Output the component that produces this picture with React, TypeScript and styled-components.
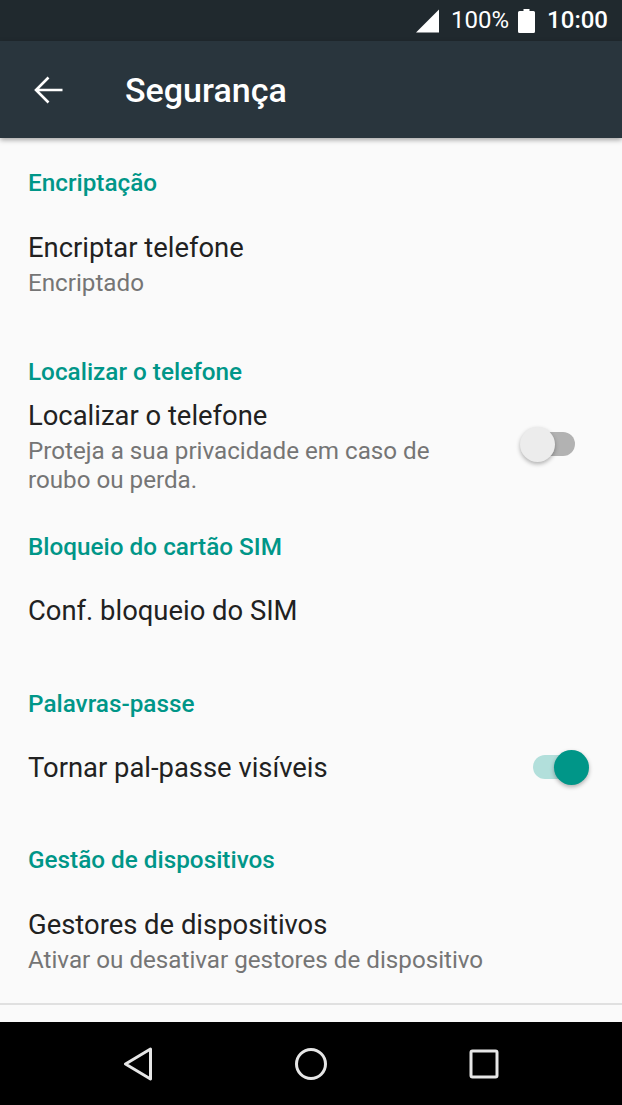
import {createGlobalStyle, styled} from 'styled-components';

const GlobalStyle = createGlobalStyle`
    html, body {
        margin: 0;
        padding: 0;
        background: #fafafa;
    }
`

const Screen = styled.div`
    display: flex;
    flex-direction: column;
    width: 622px;
    height: 1105px;
    overflow: hidden;
    background: #fafafa;
    font-family: Roboto, sans-serif;
`

const StatusBar = styled.header`
    display: flex;
    align-items: center;
    justify-content: flex-end;
    flex: 0 0 41px;
    padding-right: 14px;
    box-sizing: border-box;
    background: #20292e;
    color: #fff;
    font-size: 24px;
`

const StatusText = styled.span<{$strong?: boolean}>`
    margin-left: ${({$strong}) => ($strong ? '12px' : '11px')};
    margin-right: ${({$strong}) => ($strong ? '0' : '9px')};
    font-weight: ${({$strong}) => ($strong ? 500 : 400)};
    line-height: 41px;
`

const AppBar = styled.div`
    position: relative;
    z-index: 1;
    display: flex;
    align-items: center;
    flex: 0 0 97px;
    padding-left: 34px;
    box-sizing: border-box;
    background: #29353d;
    box-shadow: 0 2px 5px rgba(0, 0, 0, 0.35);
    color: #fff;
`

const Title = styled.h1`
    margin: 0 0 0 62px;
    font-size: 34px;
    font-weight: 500;
`

const Main = styled.main`
    flex: 1;
    overflow: hidden;
`

const Category = styled.section<{$top: number}>`
    padding-top: ${({$top}) => $top}px;
`

const Heading = styled.h2`
    margin: 0;
    padding-left: 28px;
    color: #009688;
    font-size: 24.3px;
    font-weight: 500;
    line-height: 32px;
`

// $nudge moves the content down (positive) or up (negative) without changing the row height
const Row = styled.div<{$height: number, $nudge?: number}>`
    display: flex;
    align-items: center;
    justify-content: space-between;
    box-sizing: border-box;
    height: ${({$height}) => $height}px;
    padding: ${({$nudge = 0}) => Math.max($nudge, 0)}px 40px ${({$nudge = 0}) => Math.max(-$nudge, 0)}px 28px;
`

const ItemTitle = styled.div`
    color: #212121;
    font-size: 27.4px;
    line-height: 36px;
`

const ItemSub = styled.div`
    margin-top: 3px;
    color: #757575;
    font-size: 24.2px;
    line-height: 29px;
`

const Track = styled.div<{$on?: boolean}>`
    position: relative;
    flex: 0 0 49px;
    height: 24px;
    margin-right: ${({$on}) => ($on ? '0' : '7px')};
    margin-bottom: ${({$on}) => ($on ? '2px' : '4px')};
    border-radius: 12px;
    background: ${({$on}) => ($on ? '#b2dfdb' : '#b2b2b2')};
`

const Thumb = styled.div<{$on?: boolean}>`
    position: absolute;
    top: -5px;
    left: ${({$on}) => ($on ? '21px' : '-6px')};
    width: 35px;
    height: 35px;
    border-radius: 50%;
    background: ${({$on}) => ($on ? '#009688' : '#ececec')};
    box-shadow: 0 2px 4px rgba(0, 0, 0, 0.3);
`

const Divider = styled.hr`
    margin: 0;
    border: 0;
    border-top: 2px solid #e0e0e0;
`

const NavBar = styled.nav`
    display: flex;
    align-items: center;
    flex: 0 0 83px;
    background: #000;
`

const NavSlot = styled.div`
    display: flex;
    align-items: center;
    justify-content: center;
    width: 173px;
    &:first-child {
        margin-left: 51px;
    }
`

function Toggle({on}: {on?: boolean}) {
    return (
        <Track $on={on}>
            <Thumb $on={on} />
        </Track>
    )
}

export default function App() {
    return (
        <Screen>
            <GlobalStyle />
            <StatusBar>
                <svg width="24" height="24" viewBox="0 0 24 24">
                    <path d="M23 0.5V23.5H0Z" fill="#fff" />
                </svg>
                <StatusText>100%</StatusText>
                <svg width="17" height="24" viewBox="0 0 17 24">
                    <path d="M5.5 0h6v2h4a1.5 1.5 0 0 1 1.5 1.5v19a1.5 1.5 0 0 1-1.5 1.5h-14a1.5 1.5 0 0 1-1.5-1.5v-19A1.5 1.5 0 0 1 1.500 2h4Z" fill="#fff" />
                </svg>
                <StatusText $strong>10:00</StatusText>
            </StatusBar>
            <AppBar>
                <svg width="29" height="28" viewBox="0 0 29 28">
                    <path d="M28.500 14H3.500M14.500 1.500 2 14l12.500 12.500" fill="none" stroke="#fff" strokeWidth="2.6" />
                </svg>
                <Title>Segurança</Title>
            </AppBar>
            <Main>
                <Category $top={29}>
                    <Heading>Encriptação</Heading>
                    <Row $height={132} $nudge={-3}>
                        <div>
                            <ItemTitle>Encriptar telefone</ItemTitle>
                            <ItemSub>Encriptado</ItemSub>
                        </div>
                    </Row>
                </Category>
                <Category $top={25}>
                    <Heading>Localizar o telefone</Heading>
                    <Row $height={114} $nudge={2}>
                        <div>
                            <ItemTitle>Localizar o telefone</ItemTitle>
                            <ItemSub>Proteja a sua privacidade em caso de<br />roubo ou perda.</ItemSub>
                        </div>
                        <Toggle />
                    </Row>
                </Category>
                <Category $top={29}>
                    <Heading>Bloqueio do cartão SIM</Heading>
                    <Row $height={96}>
                        <ItemTitle>Conf. bloqueio do SIM</ItemTitle>
                    </Row>
                </Category>
                <Category $top={29}>
                    <Heading>Palavras-passe</Heading>
                    <Row $height={96}>
                        <ItemTitle>Tornar pal-passe visíveis</ItemTitle>
                        <Toggle on />
                    </Row>
                </Category>
                <Category $top={28}>
                    <Heading>Gestão de dispositivos</Heading>
                    <Row $height={127} $nudge={3}>
                        <div>
                            <ItemTitle>Gestores de dispositivos</ItemTitle>
                            <ItemSub>Ativar ou desativar gestores de dispositivo</ItemSub>
                        </div>
                    </Row>
                    <Divider />
                </Category>
            </Main>
            <NavBar>
                <NavSlot>
                    <svg width="30" height="34" viewBox="0 0 30 34">
                        <path d="M27.500 2 2.500 17l25 15Z" fill="none" stroke="#e6e6e6" strokeWidth="3" strokeLinejoin="round" />
                    </svg>
                </NavSlot>
                <NavSlot>
                    <svg width="32" height="32" viewBox="0 0 32 32">
                        <circle cx="16" cy="16" r="14.500" fill="none" stroke="#e6e6e6" strokeWidth="3" />
                    </svg>
                </NavSlot>
                <NavSlot>
                    <svg width="30" height="30" viewBox="0 0 30 30">
                        <rect x="2" y="2" width="26" height="26" rx="1.500" fill="none" stroke="#e6e6e6" strokeWidth="3" />
                    </svg>
                </NavSlot>
            </NavBar>
        </Screen>
    )
}
